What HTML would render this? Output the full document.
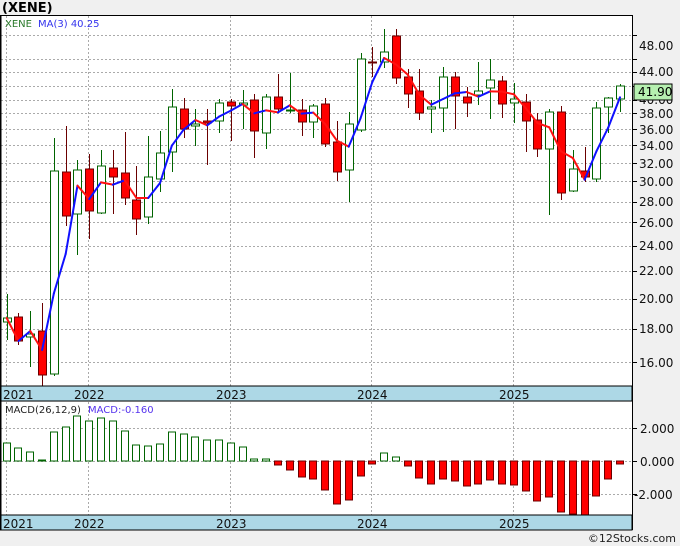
<!DOCTYPE html>
<html><head><meta charset="utf-8"><style>
html,body{margin:0;padding:0;background:#f0f0f0;}
svg{display:block;font-family:"DejaVu Sans","Liberation Sans",sans-serif;}
</style></head><body>
<svg id="s" width="680" height="546" viewBox="0 0 680 546" xmlns="http://www.w3.org/2000/svg">
<rect x="0" y="0" width="680" height="546" fill="#f0f0f0"/>
<rect x="1" y="15" width="631" height="371" fill="#fff"/>
<rect x="1" y="402" width="631" height="113" fill="#fff"/>
<g id="grid" stroke="#aaa" stroke-width="1" stroke-dasharray="2,2"></g>
<g id="c"></g>
<g id="m"></g>
<rect x="0" y="386" width="632" height="15" fill="#add8e6" stroke="#000"/>
<rect x="0" y="515" width="632" height="15" fill="#add8e6" stroke="#000"/>
<line x1="0.5" y1="15" x2="0.5" y2="530" stroke="#000" stroke-width="2"/>
<line x1="0" y1="15.5" x2="632" y2="15.5" stroke="#000"/>
<line x1="632.5" y1="15" x2="632.5" y2="530" stroke="#000"/>
<g font-size="12" fill="#111">
<text x="3" y="399">2021</text><text x="74" y="399">2022</text><text x="216" y="399">2023</text><text x="357" y="399">2024</text><text x="499" y="399">2025</text>
<text x="3" y="528">2021</text><text x="74" y="528">2022</text><text x="216" y="528">2023</text><text x="357" y="528">2024</text><text x="499" y="528">2025</text>
</g>
<g id="ax" font-size="12" fill="#111"></g>
<text x="2" y="12" font-size="13" font-weight="bold" fill="#000">(XENE)</text>
<text x="5" y="27" font-size="10" fill="#2a7a2a">XENE</text>
<text x="38" y="27" font-size="10" fill="#3333ee">MA(3)  40.25</text>
<text x="5" y="413" font-size="10" fill="#222">MACD(26,12,9)</text>
<text x="88" y="413" font-size="10" fill="#5533ee">MACD:-0.160</text>
<rect x="634" y="84" width="38" height="16" fill="#b6f0b0" stroke="#000"/>
<text x="638" y="96" font-size="12" fill="#000">41.90</text>
<text x="676" y="542" font-size="11" fill="#222" text-anchor="end">©12Stocks.com</text>
</svg>
<script>
var NS="http://www.w3.org/2000/svg";
function el(p,t,a){var e=document.createElementNS(NS,t);for(var k in a)e.setAttribute(k,a[k]);p.appendChild(e);return e;}
var g=document.getElementById('grid'),c=document.getElementById('c'),m=document.getElementById('m'),ax=document.getElementById('ax');
[6.5,88.5,230.5,371.5,513.5].forEach(function(x){el(g,'line',{x1:x,y1:16,x2:x,y2:386});el(g,'line',{x1:x,y1:402,x2:x,y2:515});});
[35,59,72,86,100,113,129,145,163,181,202,222,246,271,299,329,362].forEach(function(y){el(g,'line',{x1:1,y1:y+.5,x2:632,y2:y+.5});el(ax,'line',{x1:632,y1:y+.5,x2:637,y2:y+.5,stroke:'#000'});});
[428,461,494].forEach(function(y){el(g,'line',{x1:1,y1:y+.5,x2:632,y2:y+.5});});
[[48,45],[44,71],[40,99],[38,113],[36,129],[34,145],[32,163],[30,181],[28,201],[26,222],[24,245],[22,270],[20,298],[18,328],[16,362]].forEach(function(a){var t=el(ax,'text',{x:639,y:a[1]+5});t.textContent=a[0].toFixed(2);});
[[2,428,'2.000'],[0,461,'0.000'],[-2,494,'-2.000']].forEach(function(a){el(ax,'line',{x1:632,y1:a[1]+.5,x2:637,y2:a[1]+.5,stroke:'#000'});var t=el(ax,'text',{x:a[0]<0?634:640,y:a[1]+5});t.textContent=a[2];});
// [bodyTop, bodyBot, wickTop, wickBot, red]
var d=[[318,322,294,340,0],[317,341,313,345,1],[334,337,311,367,0],[331,375,303,387,1],[171,374,138,376,0],[172,216,126,226,1],[170,214,160,255,0],[169,211,154,239,1],[166,213,150,214,0],[168,177,150,214,1],[173,198,132,205,1],[200,219,166,235,1],[177,217,136,224,0],[153,179,131,192,0],[107,152,89,172,0],[109,129,98,138,1],[124,126,109,146,0],[121,123,109,165,1],[103,121,99,133,0],[102,106,99,141,1],[103,105,90,129,0],[100,131,94,158,1],[97,133,94,149,0],[97,109,74,113,1],[110,111,73,113,0],[110,122,99,136,1],[106,122,104,138,0],
[104,144,98,147,1],[142,172,121,181,1],[124,170,112,202,0],[59,130,53,132,0],[62,63,47,77,1],[52,62,29,68,0],[36,78,29,84,1],[77,94,69,108,1],[91,113,69,120,1],[107,109,100,133,0],[77,108,67,132,0],[77,96,72,129,1],[97,103,87,117,1],[91,95,62,105,0],[80,88,59,119,0],[81,104,76,118,1],[99,103,83,123,0],[102,121,94,152,1],[120,149,113,157,1],[112,149,109,215,0],[112,193,106,200,1],[169,191,150,192,0],[171,177,147,182,1],[108,179,102,182,0],[98,107,97,133,0],[86,99,84,112,0]];
var md=[443,448,452,460,432,427,416,421,418,421,431,445,446,444,432,434,437,440,440,443,447,459,459,465,470,477,479,490,504,500,476,464,453,457,466,478,484,479,481,486,484,480,484,485,491,501,497,512,514,515,496,479,464];
var step=(620-6.7)/52,closes=[];
d.forEach(function(k,i){var x=Math.round(6.7+i*step)+.5;var red=k[4];var col=red?'#6b0000':'#006400';
el(c,'line',{x1:x,y1:k[2],x2:x,y2:k[3],stroke:col});
el(c,'rect',{x:x-4,y:k[0],width:8,height:Math.max(1,k[1]-k[0]),fill:red?'#f00':'#fff',stroke:col});
closes.push(red?k[1]:k[0]);
var z=461,v=md[i];
if(v<=z)el(c,'rect',{x:x-4,y:v,width:7,height:Math.max(1,z-v),fill:'#fff',stroke:'#006400'});
else el(c,'rect',{x:x-4,y:z,width:7,height:v-z,fill:'#f00',stroke:'#6b0000'});
});
var ma=closes.map(function(v,i){if(i<2)return v;return (closes[i]+closes[i-1]+closes[i-2])/3;});
for(var i=1;i<ma.length;i++){var x0=6.7+(i-1)*step,x1=6.7+i*step;
el(m,'line',{x1:x0,y1:ma[i-1],x2:x1,y2:ma[i],stroke:ma[i]<ma[i-1]?'#1010ff':'#ff1010','stroke-width':2,'stroke-linecap':'round'});}
</script>
</body></html>
